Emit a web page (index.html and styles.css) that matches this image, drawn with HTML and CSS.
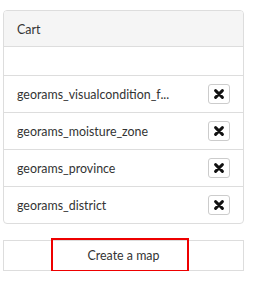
FILE: index.html
```html
<!DOCTYPE html>
<html lang="en">
<head>
    <title>Cart</title>
    <link rel="stylesheet" href="styles.css">
</head>
<body>
    <div class="panel">
        <div class="panel-heading">Cart</div>
        <div class="panel-empty"></div>
        <ul class="cart-list">
            <li class="cart-item">
                <span class="layer-name">georams_visualcondition_f...</span>
                <button class="remove-btn" title="Remove"><svg viewBox="0 0 10 10" width="10" height="10"><path d="M1.6 1.6 L8.4 8.4 M8.4 1.6 L1.6 8.4" stroke="#111" stroke-width="2.9" stroke-linecap="round"/></svg></button>
            </li>
            <li class="cart-item">
                <span class="layer-name">georams_moisture_zone</span>
                <button class="remove-btn" title="Remove"><svg viewBox="0 0 10 10" width="10" height="10"><path d="M1.6 1.6 L8.4 8.4 M8.4 1.6 L1.6 8.4" stroke="#111" stroke-width="2.9" stroke-linecap="round"/></svg></button>
            </li>
            <li class="cart-item">
                <span class="layer-name">georams_province</span>
                <button class="remove-btn" title="Remove"><svg viewBox="0 0 10 10" width="10" height="10"><path d="M1.6 1.6 L8.4 8.4 M8.4 1.6 L1.6 8.4" stroke="#111" stroke-width="2.9" stroke-linecap="round"/></svg></button>
            </li>
            <li class="cart-item">
                <span class="layer-name">georams_district</span>
                <button class="remove-btn" title="Remove"><svg viewBox="0 0 10 10" width="10" height="10"><path d="M1.6 1.6 L8.4 8.4 M8.4 1.6 L1.6 8.4" stroke="#111" stroke-width="2.9" stroke-linecap="round"/></svg></button>
            </li>
        </ul>
    </div>
    <div class="map-btn-wrap">
        <button class="map-btn">Create a map</button>
        <div class="highlight"></div>
    </div>
</body>
</html>
```
FILE: styles.css
```css
body {
    margin: 10px 12px 0 3px;
    font-family: Lato, "Open Sans", sans-serif;
    font-size: 12.4px;
    color: #333;
    background: #fff;
}
.panel {
    border: 1px solid #ddd;
    border-radius: 4px;
    overflow: hidden;
}
.panel-heading {
    background: #f5f5f5;
    border-bottom: 1px solid #ddd;
    height: 35px;
    line-height: 37px;
    padding: 0 13px;
}
.panel-empty {
    height: 28px;
    border-bottom: 1px solid #ddd;
}
.cart-list {
    list-style: none;
    margin: 0;
    padding: 0;
}
.cart-item {
    display: flex;
    align-items: center;
    justify-content: space-between;
    height: 36px;
    padding: 0 13px 0 13px;
    border-bottom: 1px solid #ddd;
}
.cart-item:last-child {
    border-bottom: none;
}
.remove-btn {
    display: flex;
    align-items: center;
    justify-content: center;
    width: 22px;
    height: 20px;
    padding: 0;
    border: 1px solid #ccc;
    border-radius: 3px;
    background: #fff;
}
.map-btn-wrap {
    position: relative;
    margin-top: 16px;
}
.map-btn {
    display: block;
    width: 100%;
    height: 31px;
    border: 1px solid #ddd;
    background: #fff;
    font-family: Lato, "Open Sans", sans-serif;
    font-size: 12.4px;
    color: #333;
    padding: 0;
}
/* red annotation box drawn over the button */
.highlight {
    position: absolute;
    left: 48px;
    top: -2px;
    width: 134px;
    height: 30px;
    border: 2px solid #e00;
    pointer-events: none;
}
```
